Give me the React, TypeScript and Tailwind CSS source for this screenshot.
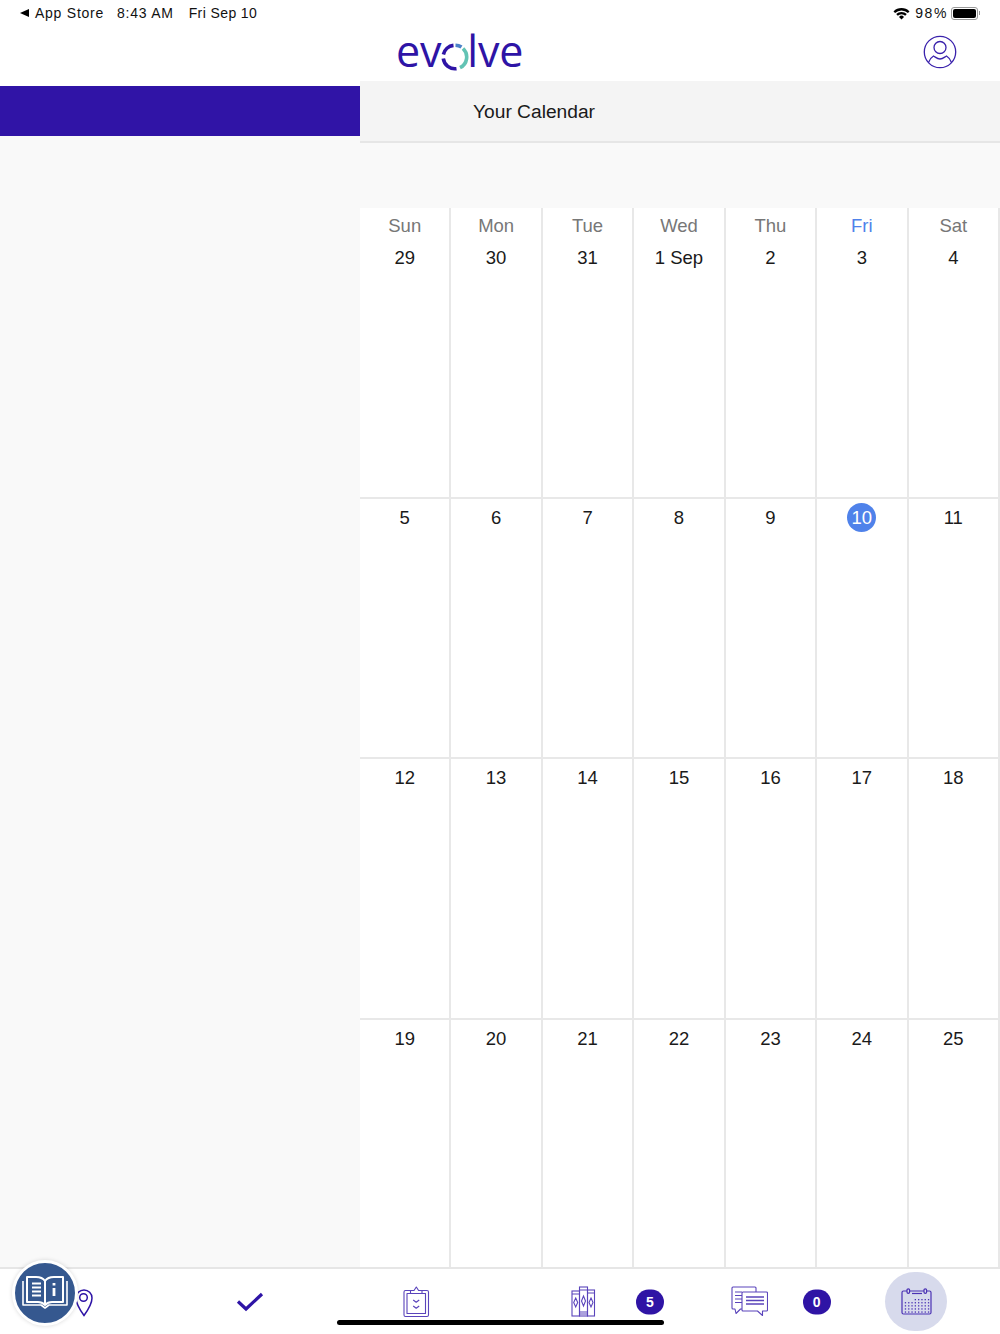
import React from 'react'

const sans = { fontFamily: '"Liberation Sans", Arial, sans-serif' }

const weeks = [
  ['29', '30', '31', '1 Sep', '2', '3', '4'],
  ['5', '6', '7', '8', '9', '10', '11'],
  ['12', '13', '14', '15', '16', '17', '18'],
  ['19', '20', '21', '22', '23', '24', '25'],
]
const dayNames = ['Sun', 'Mon', 'Tue', 'Wed', 'Thu', 'Fri', 'Sat']

function StatusBar() {
  return (
    <div className="flex h-[26px] items-center justify-between pl-5 pr-[20px] text-[14px] tracking-[0.75px] text-[#111]">
      <div className="flex items-center">
        <span className="mr-[6px] h-0 w-0 border-y-[4px] border-r-[9px] border-y-transparent border-r-black" />
        <span>App Store</span>
        <span className="ml-[13px]">8:43 AM</span>
        <span className="ml-[15px] tracking-[0.4px]">Fri Sep 10</span>
      </div>
      <div className="flex items-center">
        <svg width="17" height="13" viewBox="0 0 17 13" className="mr-[5px]">
          <path d="M0.5 4.4a11.4 11.4 0 0 1 16 0l-1.6 1.7a9 9 0 0 0-12.8 0z" fill="#000" />
          <path d="M3.2 7.1a7.5 7.5 0 0 1 10.6 0l-1.6 1.7a5.2 5.2 0 0 0-7.4 0z" fill="#000" />
          <path d="M6 9.9a3.5 3.5 0 0 1 5 0l-2.5 2.6z" fill="#000" />
        </svg>
        <span className="tracking-[1.6px]">98%</span>
        <div className="ml-[3px] flex h-[13px] w-[27px] items-center rounded-[3px] border border-[#999] p-[1px]">
          <div className="h-full w-full rounded-[2px] bg-black" />
        </div>
        <div className="ml-[1px] h-[4px] w-[1px] bg-[#999]" />
      </div>
    </div>
  )
}

function Logo() {
  return (
    <div className="relative mt-[-4px] text-[43px] leading-[58px] tracking-[-0.1px] text-[#2e14a6]" style={{ fontFamily: '"Open Sans", sans-serif' }}>
      ev<span className="text-transparent">o</span>lve
      <svg width="28" height="28" viewBox="0 0 28 28" className="absolute left-[45px] top-[21px]" fill="none" strokeWidth="3.6">
        <path d="M12.500 2.400A11.800 11.800 0 0 0 2.400 11.500" stroke="#2e14a6" />
        <path d="M2.300 15.500A11.800 11.800 0 0 0 15.500 25.700" stroke="#2e14a6" />
        <path d="M14.500 2.200A11.800 11.800 0 0 1 20.500 4" stroke="#4b82c8" />
        <path d="M22 5.500A11.800 11.800 0 0 1 19 24.700" stroke="#62c3b4" />
      </svg>
    </div>
  )
}

function PinIcon() {
  return (
    <svg width="20" height="30" viewBox="0 0 20 30" fill="none" stroke="#2e14a6" strokeWidth="1.5">
      <path d="M10 28.500C6 23 2 17 2 11a8 8 0 0 1 16 0c0 6-4 12-8 17.500z" />
      <circle cx="9.500" cy="10.500" r="3.800" />
    </svg>
  )
}

function ChecklistIcon() {
  return (
    <svg width="27" height="32" viewBox="0 0 27 32" fill="none" stroke="#5a44bb" strokeWidth="1.1" strokeLinejoin="round">
      <rect x="1" y="4.500" width="24.500" height="26" rx="1.500" />
      <rect x="4" y="7.500" width="18.500" height="20" />
      <path d="M7.500 7.500V4.500h3.500L13.300 1l2.300 3.500H19v3z" fill="#fff" />
      <path d="M10.200 14l3 2.200 3-2.200M10.200 20l3 2.200 3-2.200" strokeWidth="1.200" />
    </svg>
  )
}

function BooksIcon() {
  return (
    <svg width="25" height="31" viewBox="0 0 25 31" fill="none" stroke="#5a44bb" strokeWidth="1.1">
      <rect x="1" y="5" width="7.500" height="25" />
      <rect x="8.500" y="1" width="8" height="29" />
      <rect x="16.500" y="4" width="7" height="26" />
      <path d="M8.500 4h8M8.500 26h8M8.500 28h8M1 8h7.500M16.500 7h7" />
      <path d="M4.700 12l2 4.500-2 4.500-2-4.500zM12.500 10l2 5-2 5-2-5zM20 12l2 4.500-2 4.500-2-4.500z" />
    </svg>
  )
}

function ChatIcon() {
  return (
    <svg width="37" height="31" viewBox="0 0 37 31" fill="none" stroke="#5a44bb" strokeWidth="1.1" strokeLinejoin="round">
      <path d="M25 6V2a1 1 0 0 0-1-1H2a1 1 0 0 0-1 1v20a1 1 0 0 0 1 1h2l1 4.500L9.500 23H11" />
      <path d="M12 6h23.500a1 1 0 0 1 1 1v17a1 1 0 0 1-1 1H31.500l0 4.500L26.500 25H12a1 1 0 0 1-1-1V7a1 1 0 0 1 1-1z" fill="#fff" />
      <path d="M4 6h7M4 9.500h7M4 13h7M4 16.500h7" />
      <path d="M15 11h18M15 14.500h18M15 18h18" strokeWidth="1.400" />
    </svg>
  )
}

function CalendarIcon() {
  const dots: React.ReactNode[] = []
  for (let r = 0; r < 5; r++) {
    for (let c = 0; c < 8; c++) {
      if (r === 0 && c < 3) continue
      dots.push(<rect key={`${r}-${c}`} x={3.800 + c * 3.300} y={11 + r * 3.100} width="1.300" height="1.300" fill="#4b32b4" stroke="none" />)
    }
  }
  return (
    <svg width="31" height="27" viewBox="0 0 31 27" fill="none" stroke="#4b32b4" strokeWidth="1.200">
      <rect x="1" y="3" width="29" height="23" rx="1.500" />
      <rect x="6" y="0.800" width="2.600" height="4.600" rx="1.300" fill="#d7daec" />
      <rect x="23" y="0.800" width="2.600" height="4.600" rx="1.300" fill="#d7daec" />
      <path d="M11 5.500h10" />
      {dots}
    </svg>
  )
}

function BookBadge() {
  return (
    <div className="absolute left-[12px] top-[-9px] flex h-[66px] w-[66px] items-center justify-center rounded-full border-[3px] border-white bg-[#35588f] shadow-[0_0_4px_rgba(0,0,0,0.15)]">
      <svg width="50" height="36" viewBox="0 0 50 36" fill="none" stroke="#fff" strokeWidth="1.600" strokeLinejoin="round">
        <path d="M3 6v24h18l4 3 4-3h18V6" />
        <path d="M25 6c-2-3-6-4-9-4H7v25h11c3 0 5 1 7 3 2-2 4-3 7-3h11V2h-9c-3 0-7 1-9 4zM25 6v24" fill="#35588f" strokeWidth="2" />
        <path d="M12 8.500h9M12 12.500h9M12 16.500h9M12 20.500h9" strokeWidth="2" />
        <path d="M34 8v2.500M34 13v8" strokeWidth="2.800" />
      </svg>
    </div>
  )
}

function CountBadge({ n, left }: { n: number; left: string }) {
  return (
    <span className={'absolute top-1/2 flex h-[25px] w-[28px] -translate-y-1/2 items-center justify-center rounded-full bg-[#2f14a5] text-[14px] font-bold text-white ' + left}>
      {n}
    </span>
  )
}

export default function App() {
  return (
    <div className="relative flex h-[1334px] w-[1000px] flex-col overflow-hidden bg-white" style={sans}>
      <div className="relative h-[81px] shrink-0 bg-white">
        <StatusBar />
        <div className="flex h-[55px] items-start justify-between pl-[396px] pr-[43px]">
          <Logo />
          <svg width="34" height="34" viewBox="0 0 34 34" fill="none" stroke="#3a22ac" strokeWidth="1.300" className="mt-[9px]">
            <circle cx="17" cy="17" r="15.700" />
            <circle cx="17" cy="12.500" r="6" />
            <path d="M5.500 27.500c1-3 2.500-5 5-6.500 2 1 3.500 3 6.500 3s4.500-2 6.500-3c2.500 1.500 4 3.500 5 6.500" />
          </svg>
        </div>
      </div>

      <div className="flex min-h-0 flex-1">
        <div className="flex w-[360px] shrink-0 flex-col">
          <div className="h-[5px] bg-white" />
          <div className="h-[50px] bg-[#3014a6]" />
          <div className="flex-1 bg-[#f9f9f9]" />
        </div>
        <div className="flex min-w-0 flex-1 flex-col">
          <div className="flex h-[62px] shrink-0 items-center border-b-2 border-[#e6e6e6] bg-[#f4f4f4] pl-[113px] pt-[3px] text-[19.2px] text-[#1a1a1a]">
            Your Calendar
          </div>
          <div className="h-[65px] shrink-0 bg-[#f9f9f9]" />
          <div className="grid flex-1 grid-cols-7 grid-rows-[291px_260px_261px_1fr] bg-white">
            {weeks.map((week, w) =>
              week.map((d, i) => {
                const today = d === '10'
                return (
                  <div
                    key={d}
                    className={'flex flex-col items-center border-r-2 border-[#e8e8e8] text-[18.5px] text-[#1a1a1a] ' + (w < 3 ? 'border-b-2' : '')}
                  >
                    {w === 0 && (
                      <div className={'mt-[7px] mb-[6px] leading-[22px] ' + (i === 5 ? 'text-[#4f82ea]' : 'text-[#777]')}>{dayNames[i]}</div>
                    )}
                    <div
                      className={
                        'flex h-[29px] min-w-[29px] items-center justify-center rounded-full ' +
                        (w > 0 ? 'mt-[4px] ' : '') +
                        (today ? 'bg-[#4f82ea] text-white' : '')
                      }
                    >
                      {d}
                    </div>
                  </div>
                )
              })
            )}
          </div>
        </div>
      </div>

      <div className="relative grid h-[67px] shrink-0 grid-cols-6 border-t-2 border-[#e6e6e6] bg-white">
        <div className="flex items-center justify-center pl-[1px]"><PinIcon /></div>
        <div className="flex items-center justify-center">
          <svg width="28" height="20" viewBox="0 0 28 20" fill="none" stroke="#2e14a6" strokeWidth="3.200">
            <path d="M2 9.500l8 7.500L26 2" />
          </svg>
        </div>
        <div className="flex items-center justify-center"><ChecklistIcon /></div>
        <div className="relative flex items-center justify-center">
          <BooksIcon />
          <CountBadge n={5} left="left-[136px]" />
        </div>
        <div className="relative flex items-center justify-center">
          <ChatIcon />
          <CountBadge n={0} left="left-[136px]" />
        </div>
        <div className="flex items-center justify-center pr-[1px]">
          <div className="flex h-[59px] w-[62px] items-center justify-center rounded-full bg-[#d7daec]">
            <CalendarIcon />
          </div>
        </div>
        <BookBadge />
        <div className="absolute bottom-[9px] left-[337px] h-[5px] w-[327px] rounded-full bg-black" />
      </div>
    </div>
  )
}
